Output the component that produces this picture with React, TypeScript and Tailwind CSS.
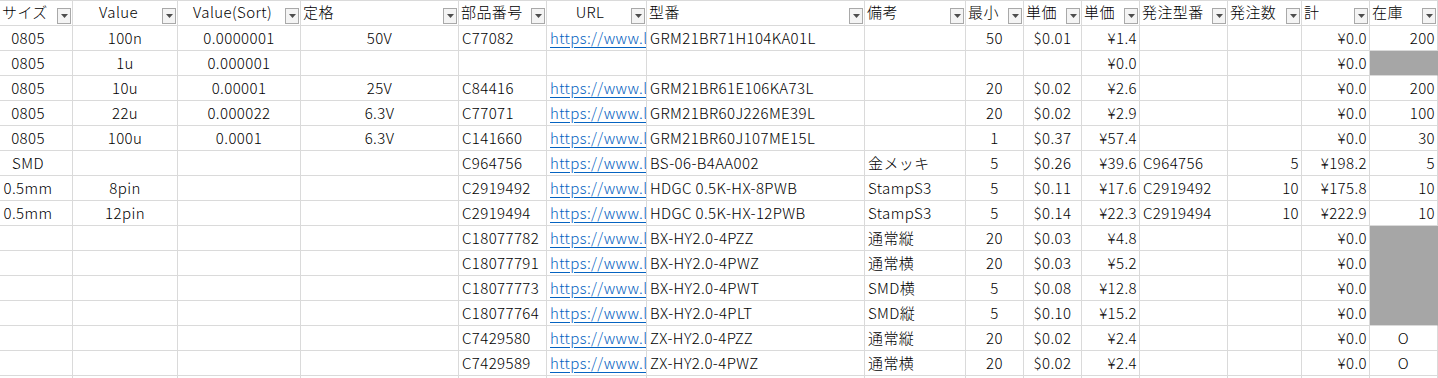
import React from 'react';

type Align = 'l' | 'c' | 'r' | 'cl';

interface Col {
  title: string;
  width: number;
  head: 'l' | 'c';
  align: Align;
}

const cols: Col[] = [
  { title: 'サイズ', width: 73, head: 'l', align: 'cl' },
  { title: 'Value', width: 105, head: 'c', align: 'c' },
  { title: 'Value(Sort)', width: 123, head: 'c', align: 'c' },
  { title: '定格', width: 158, head: 'l', align: 'c' },
  { title: '部品番号', width: 88, head: 'l', align: 'l' },
  { title: 'URL', width: 100, head: 'c', align: 'l' },
  { title: '型番', width: 218, head: 'l', align: 'l' },
  { title: '備考', width: 101, head: 'l', align: 'l' },
  { title: '最小', width: 58, head: 'l', align: 'c' },
  { title: '単価', width: 58, head: 'l', align: 'c' },
  { title: '単価', width: 58, head: 'l', align: 'r' },
  { title: '発注型番', width: 88, head: 'l', align: 'l' },
  { title: '発注数', width: 74, head: 'l', align: 'r' },
  { title: '計', width: 68, head: 'l', align: 'r' },
  { title: '在庫', width: 68, head: 'l', align: 'r' },
];

const URL = 'https://www.l';
const G = '#gray';

// one array per row, 15 cells; G marks a grey filled stock cell
const rows: string[][] = [
  ['0805', '100n', '0.0000001', '50V', 'C77082', URL, 'GRM21BR71H104KA01L', '', '50', '$0.01', '¥1.4', '', '', '¥0.0', '200'],
  ['0805', '1u', '0.000001', '', '', '', '', '', '', '', '¥0.0', '', '', '¥0.0', G],
  ['0805', '10u', '0.00001', '25V', 'C84416', URL, 'GRM21BR61E106KA73L', '', '20', '$0.02', '¥2.6', '', '', '¥0.0', '200'],
  ['0805', '22u', '0.000022', '6.3V', 'C77071', URL, 'GRM21BR60J226ME39L', '', '20', '$0.02', '¥2.9', '', '', '¥0.0', '100'],
  ['0805', '100u', '0.0001', '6.3V', 'C141660', URL, 'GRM21BR60J107ME15L', '', '1', '$0.37', '¥57.4', '', '', '¥0.0', '30'],
  ['SMD', '', '', '', 'C964756', URL, 'BS-06-B4AA002', '金メッキ', '5', '$0.26', '¥39.6', 'C964756', '5', '¥198.2', '5'],
  ['0.5mm', '8pin', '', '', 'C2919492', URL, 'HDGC 0.5K-HX-8PWB', 'StampS3', '5', '$0.11', '¥17.6', 'C2919492', '10', '¥175.8', '10'],
  ['0.5mm', '12pin', '', '', 'C2919494', URL, 'HDGC 0.5K-HX-12PWB', 'StampS3', '5', '$0.14', '¥22.3', 'C2919494', '10', '¥222.9', '10'],
  ['', '', '', '', 'C18077782', URL, 'BX-HY2.0-4PZZ', '通常縦', '20', '$0.03', '¥4.8', '', '', '¥0.0', G],
  ['', '', '', '', 'C18077791', URL, 'BX-HY2.0-4PWZ', '通常横', '20', '$0.03', '¥5.2', '', '', '¥0.0', G],
  ['', '', '', '', 'C18077773', URL, 'BX-HY2.0-4PWT', 'SMD横', '5', '$0.08', '¥12.8', '', '', '¥0.0', G],
  ['', '', '', '', 'C18077764', URL, 'BX-HY2.0-4PLT', 'SMD縦', '5', '$0.10', '¥15.2', '', '', '¥0.0', G],
  ['', '', '', '', 'C7429580', URL, 'ZX-HY2.0-4PZZ', '通常縦', '20', '$0.02', '¥2.4', '', '', '¥0.0', 'O'],
  ['', '', '', '', 'C7429589', URL, 'ZX-HY2.0-4PWZ', '通常横', '20', '$0.02', '¥2.4', '', '', '¥0.0', 'O'],
  ['', '', '', '', '', '', '', '', '', '', '', '', '', '', ''],
];

const alignCls: Record<Align, string> = {
  l: 'justify-start pl-[3px]',
  c: 'justify-center',
  r: 'justify-end pr-[2px]',
  cl: 'justify-center pr-[16px]',
};

function FilterButton() {
  return (
    <span className="flex h-[16px] w-[14px] shrink-0 items-center justify-center border border-[#a9a9a9] bg-[#f4f4f4]">
      <svg width="7" height="4" viewBox="0 0 7 4">
        <path d="M0 0h7L3.5 4z" fill="#4d4d4d" />
      </svg>
    </span>
  );
}

export default function App() {
  const template = cols.map((c) => `${c.width}px`).join(' ');

  return (
    <div
      className="h-[378px] w-[1438px] overflow-hidden bg-white text-[15px] font-light tracking-[0.4px] text-black"
      style={{ fontFamily: '"Noto Sans CJK JP", "Noto Sans", sans-serif' }}
    >
      <div className="grid border-t border-[#dadada]" style={{ gridTemplateColumns: template }}>
        {cols.map((c, i) => (
          <div key={`h${i}`} className="flex h-[25px] items-center border-r border-b border-[#dadada] pl-[2px] pr-[1px]">
            <span className={`flex-1 whitespace-nowrap pb-[3px] leading-[20px] ${c.head === 'c' ? 'text-center' : 'text-left'}`}>
              {c.title}
            </span>
            <div className="self-end pb-[1px]">
              <FilterButton />
            </div>
          </div>
        ))}

        {rows.map((r, ri) =>
          r.map((v, ci) => {
            const grey = v === G;
            const nextGrey = rows[ri + 1]?.[ci] === G;
            if (grey) {
              return (
                <div
                  key={`${ri}-${ci}`}
                  className={`h-[25px] border-r border-b border-r-[#a6a6a6] bg-[#a6a6a6] ${nextGrey ? 'border-b-[#a6a6a6]' : 'border-b-[#dadada]'}`}
                />
              );
            }
            const isUrl = v === URL;
            const al: Align = v === 'O' ? 'c' : cols[ci].align;
            return (
              <div
                key={`${ri}-${ci}`}
                className={`flex h-[25px] items-center overflow-hidden whitespace-nowrap border-r border-b border-[#dadada] leading-[20px] ${alignCls[al]}`}
              >
                {isUrl ? <span className="text-[#0563c1] underline underline-offset-[3px]">{v}</span> : v}
              </div>
            );
          })
        )}
      </div>
    </div>
  );
}
